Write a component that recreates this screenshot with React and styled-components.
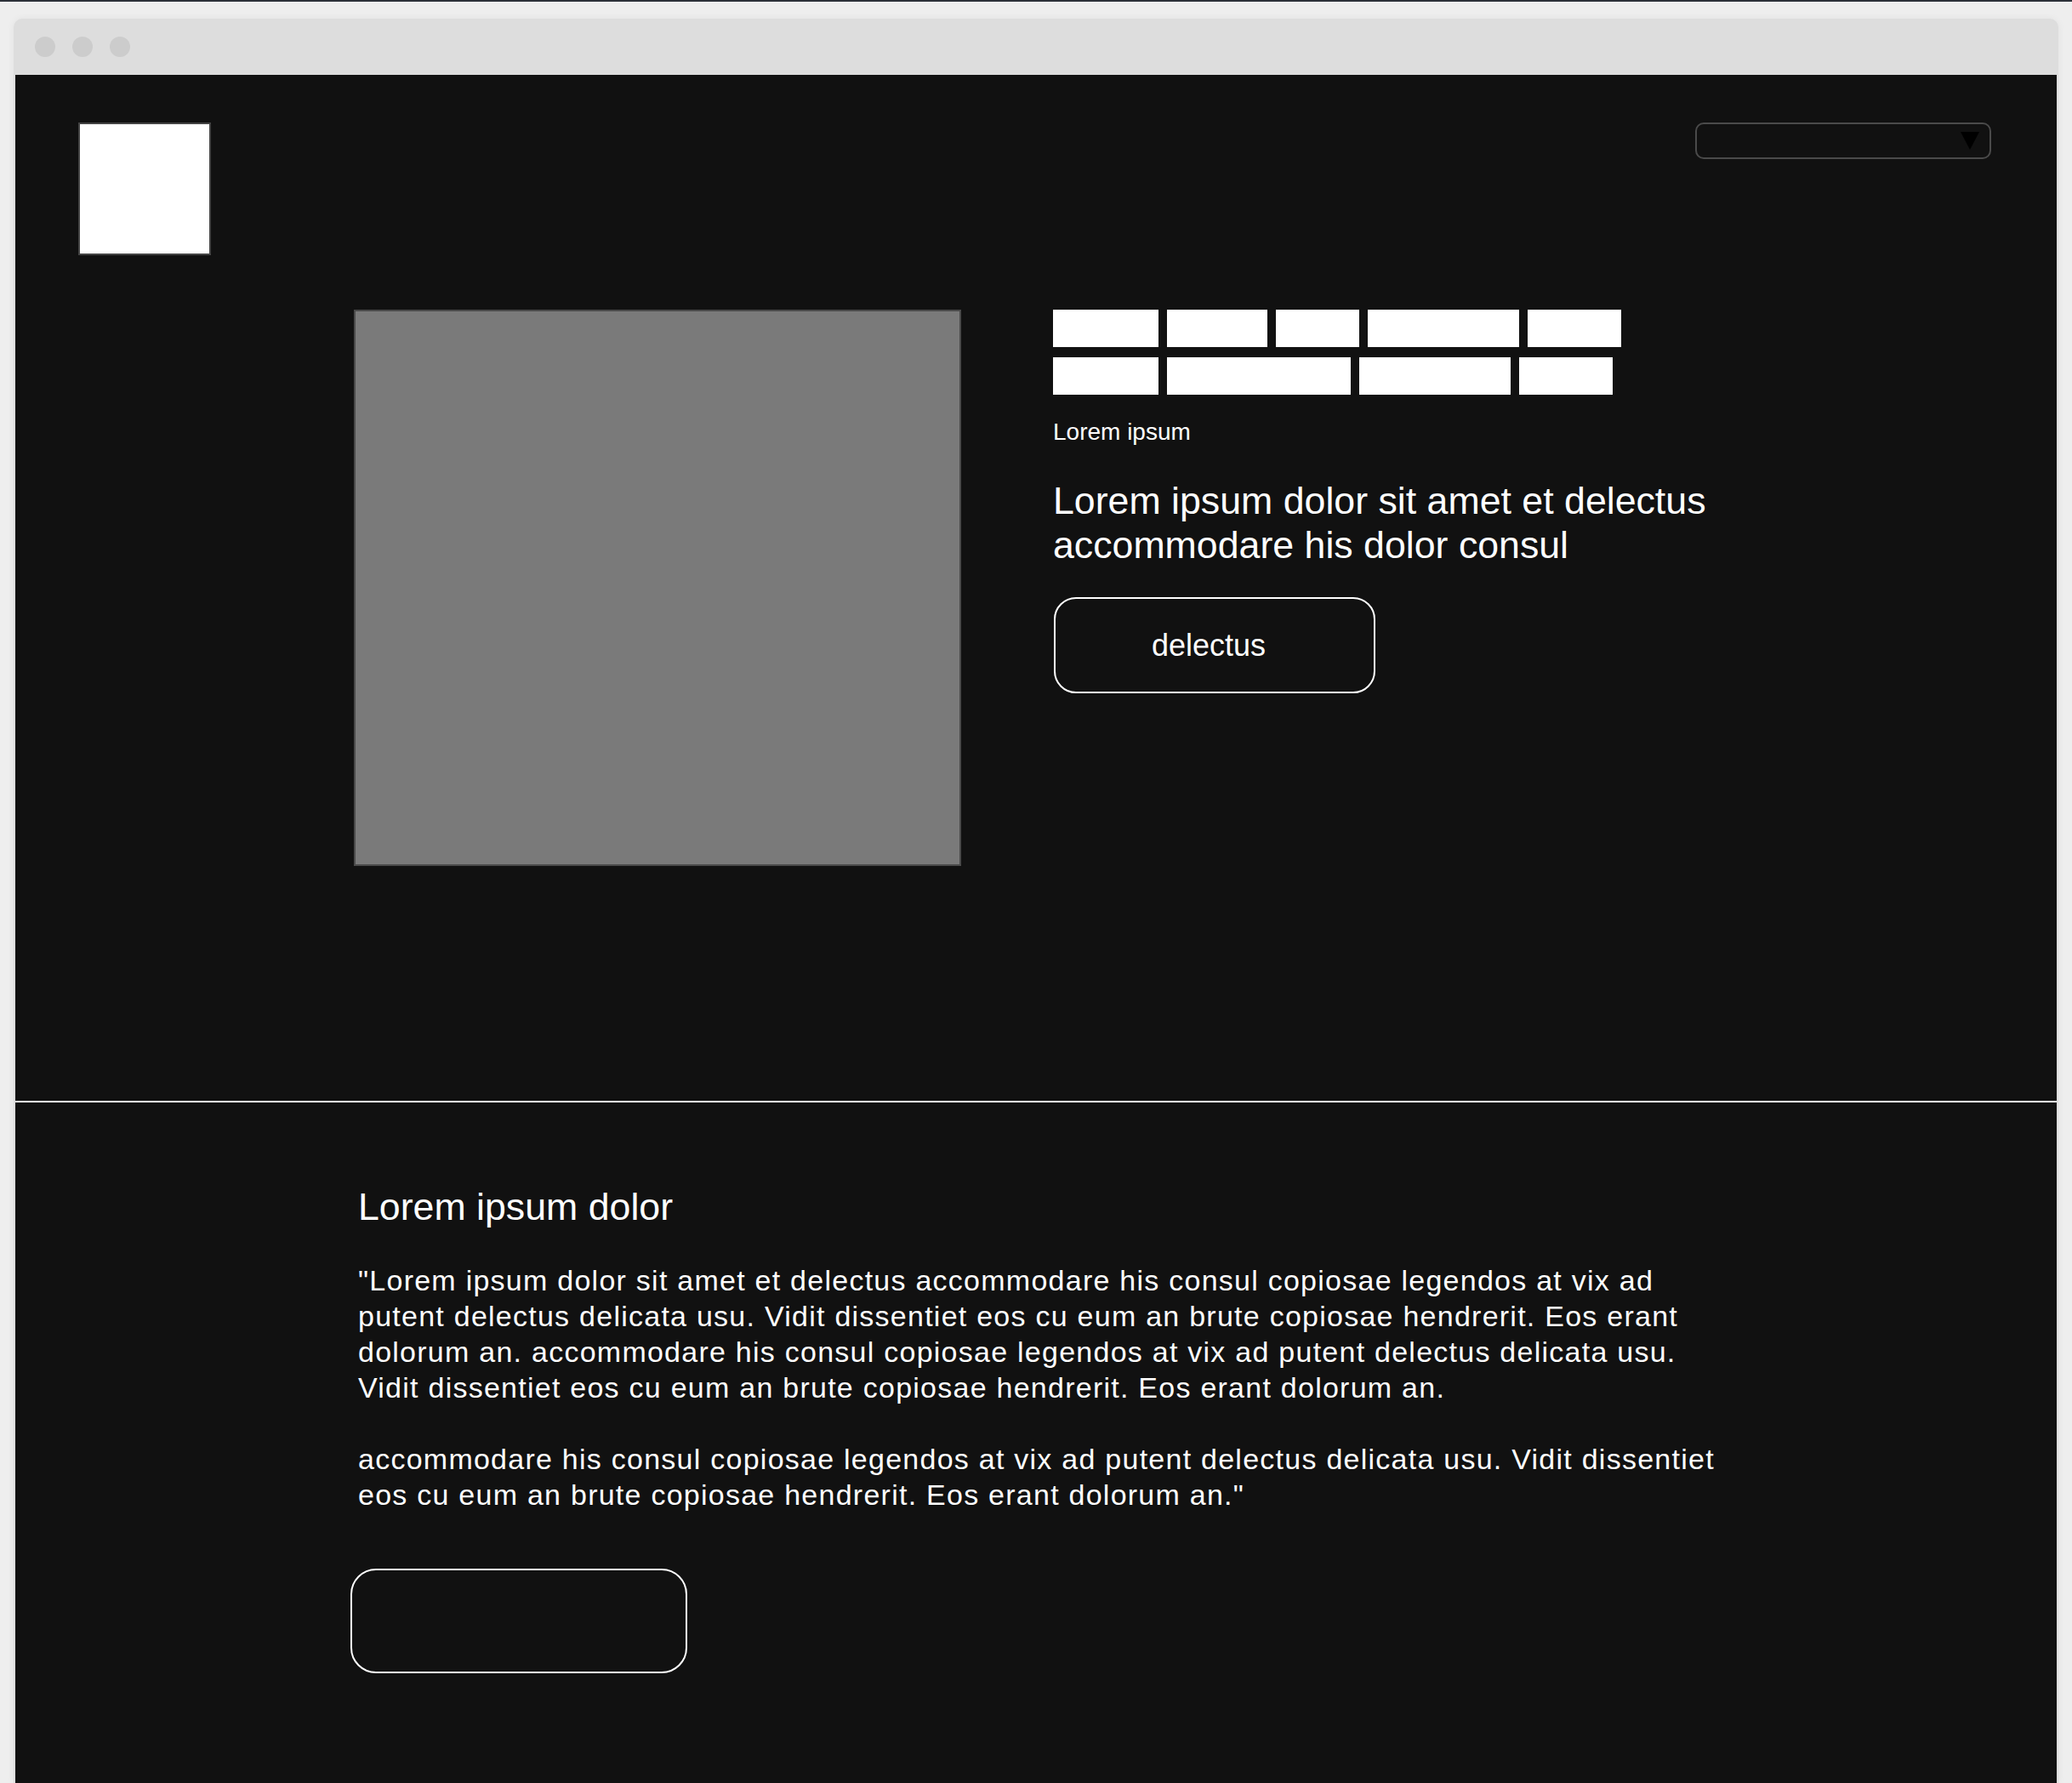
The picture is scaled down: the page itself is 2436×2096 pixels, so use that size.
import React from "react";
import styled, { createGlobalStyle } from "styled-components";

const Global = createGlobalStyle`
  html, body { margin: 0; padding: 0; }
  body {
    background: #eeeeee;
    font-family: "Liberation Sans", Arial, sans-serif;
    border-top: 2px solid #2c3039;
  }
  * { box-sizing: border-box; }
`;

const Page = styled.div`
  padding: 20px 16px 0 16px;
`;

const Window = styled.div`
  background: #dddddd;
  border-radius: 10px 10px 0 0;
  padding: 0 2px;
  box-shadow: 0 0 8px rgba(0, 0, 0, 0.06);
`;

const TitleBar = styled.div`
  height: 66px;
  display: flex;
  align-items: center;
  gap: 20px;
  padding-left: 23px;
`;

const Dot = styled.span`
  width: 24px;
  height: 24px;
  border-radius: 50%;
  background: #cccccc;
`;

const Content = styled.div`
  background: #111111;
  color: #ffffff;
`;

const Header = styled.header`
  display: flex;
  justify-content: space-between;
  align-items: flex-start;
  padding: 56px 77px 0 74px;
`;

const Logo = styled.div`
  width: 156px;
  height: 156px;
  background: #ffffff;
  border: 2px solid #444444;
`;

const Select = styled.div`
  width: 348px;
  height: 43px;
  border: 2px solid #4a4a4a;
  border-radius: 10px;
  background: #111111;
  display: flex;
  align-items: center;
  justify-content: flex-end;
  padding-right: 12px;
`;

const Container = styled.div`
  width: 1604px;
  margin: 0 auto;
`;

const Hero = styled.section`
  padding: 64px 0 276px;
`;

const HeroRow = styled.div`
  display: flex;
  gap: 108px;
  align-items: flex-start;
`;

const ImageBox = styled.div`
  width: 714px;
  height: 654px;
  flex: none;
  background: #7a7a7a;
  border: 2px solid #4a4a4a;
`;

const TextCol = styled.div`
  width: 782px;
  display: flex;
  flex-direction: column;
  align-items: flex-start;
`;

const Tags = styled.div`
  display: flex;
  flex-wrap: wrap;
  column-gap: 10px;
  row-gap: 12px;
  width: 100%;
`;

const Tag = styled.span`
  display: block;
  height: 44px;
  width: ${(p) => p.$w}px;
  background: #ffffff;
`;

const Eyebrow = styled.p`
  margin: 28px 0 0;
  font-size: 28px;
  line-height: 32px;
`;

const HeroTitle = styled.h1`
  margin: 39px 0 0;
  font-size: 44.7px;
  line-height: 52px;
  font-weight: 400;
`;

const OutlineButton = styled.button`
  margin: ${(p) => p.$margin || "0"};
  width: ${(p) => p.$w}px;
  height: ${(p) => p.$h}px;
  border: 2px solid #ffffff;
  border-radius: ${(p) => p.$r}px;
  background: #111111;
  color: #ffffff;
  font-family: "Liberation Sans", Arial, sans-serif;
  font-size: 36px;
  padding: 0 14px 0 0;
  display: flex;
  align-items: center;
  justify-content: center;
`;

const Divider = styled.hr`
  margin: 0;
  border: none;
  height: 2px;
  background: #ffffff;
`;

const About = styled.section`
  padding: 97px 0 129px;
`;

const AboutInner = styled.div`
  padding-left: 5px;
  width: 1620px;
`;

const AboutTitle = styled.h2`
  margin: 0;
  font-size: 44.7px;
  line-height: 52px;
  font-weight: 400;
`;

const Body = styled.p`
  margin: ${(p) => (p.$first ? "39px" : "42px")} 0 0;
  font-size: 34px;
  line-height: 42px;
  letter-spacing: 1.25px;
`;

export default function App() {
  const row = [124, 118, 98, 178, 110, 124, 216, 178, 110];
  return (
    <>
      <Global />
      <Page>
        <Window>
          <TitleBar>
            <Dot />
            <Dot />
            <Dot />
          </TitleBar>
          <Content>
            <Header>
              <Logo />
              <Select>
                <svg width="22" height="21" viewBox="0 0 22 21">
                  <polygon points="0,0 22,0 11,21" fill="#000" />
                </svg>
              </Select>
            </Header>
            <Hero>
              <Container>
                <HeroRow>
                  <ImageBox />
                  <TextCol>
                    <Tags>
                      {row.map((w, i) => (
                        <Tag key={i} $w={w} />
                      ))}
                    </Tags>
                    <Eyebrow>Lorem ipsum</Eyebrow>
                    <HeroTitle>
                      Lorem ipsum dolor sit amet et delectus accommodare his dolor consul
                    </HeroTitle>
                    <OutlineButton $w={378} $h={113} $r={26} $margin="35px 0 0 1px">
                      delectus
                    </OutlineButton>
                  </TextCol>
                </HeroRow>
              </Container>
            </Hero>
            <Divider />
            <About>
              <Container>
                <AboutInner>
                  <AboutTitle>Lorem ipsum dolor</AboutTitle>
                  <Body $first>
                    "Lorem ipsum dolor sit amet et delectus accommodare his consul copiosae legendos at vix ad putent delectus delicata usu. Vidit dissentiet eos cu eum an brute copiosae hendrerit. Eos erant dolorum an. accommodare his consul copiosae legendos at vix ad putent delectus delicata usu. Vidit dissentiet eos cu eum an brute copiosae hendrerit. Eos erant dolorum an.
                  </Body>
                  <Body>
                    accommodare his consul copiosae legendos at vix ad putent delectus delicata usu. Vidit dissentiet eos cu eum an brute copiosae hendrerit. Eos erant dolorum an."
                  </Body>
                  <OutlineButton $w={396} $h={123} $r={30} $margin="66px 0 0 -9px" aria-label="button" />
                </AboutInner>
              </Container>
            </About>
          </Content>
        </Window>
      </Page>
    </>
  );
}
